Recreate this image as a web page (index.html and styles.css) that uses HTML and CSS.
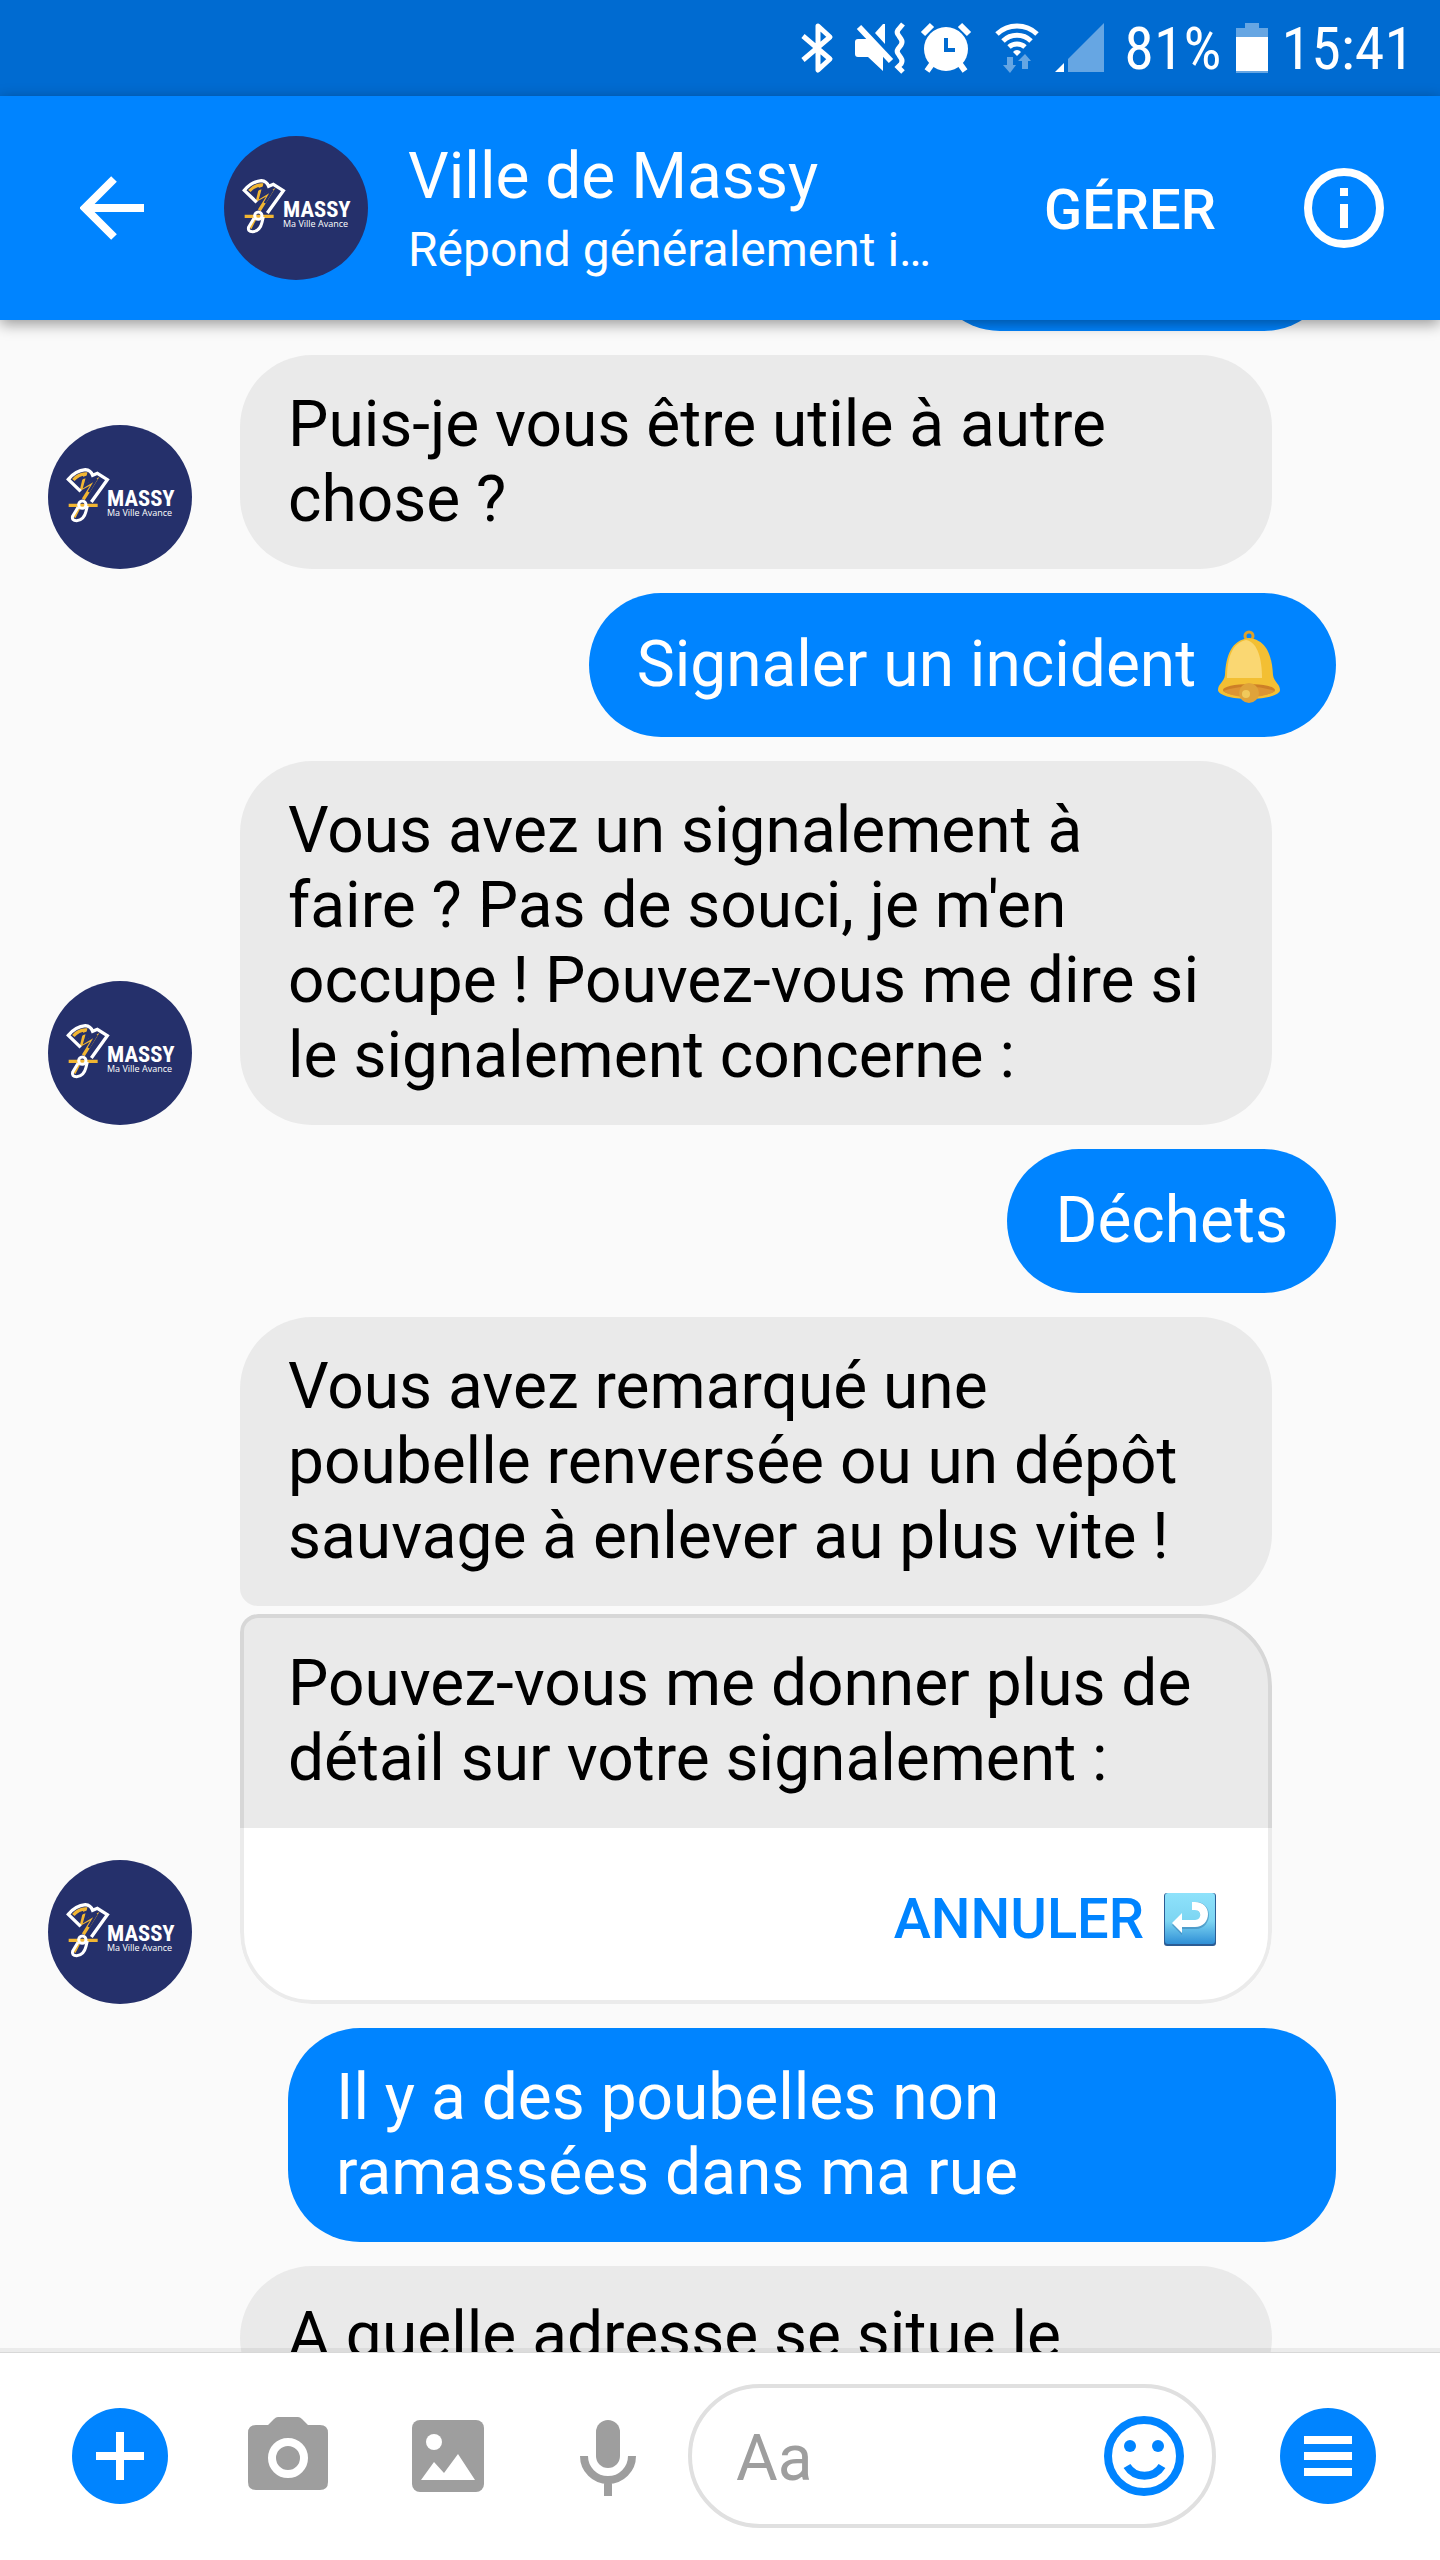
FILE: index.html
```html
<!DOCTYPE html>
<html lang="fr">
<head>
  <meta charset="UTF-8">
  <meta name="viewport" content="width=device-width, initial-scale=1">
  <title>Ville de Massy</title>
  <link rel="stylesheet" href="styles.css">
</head>
<body>

  <svg class="sprite" aria-hidden="true">
    <symbol id="logo" viewBox="54 45 432 432">
      <circle cx="270" cy="261" r="216" fill="#25306b"/>
      <path d="M130 210Q146 192 166 192L156 234L194 214L160 268M116 286H203M148 290L132 322" fill="none" stroke="#f2b632" stroke-width="10"/>
      <path d="M146 212Q158 202 172 200L164 228L200 206L176 246" fill="none" stroke="#25306b" stroke-width="7"/>
      <path d="M152 244L115 208Q136 182 166 179Q182 180 188 196L202 190L232 209L184 276" fill="none" stroke="#fff" stroke-width="10"/>
      <circle cx="157" cy="284" r="11" fill="none" stroke="#fff" stroke-width="9"/>
      <path d="M144 292L128 318Q124 332 140 332Q162 330 168 304L172 288" fill="none" stroke="#fff" stroke-width="9"/>
      <text class="logo-name" x="231" y="289">MASSY</text>
      <text class="logo-tag" x="231" y="318">Ma Ville Avance</text>
    </symbol>
  </svg>

  <div class="status">
    <div class="status-icons">
      <svg width="50" height="52" viewBox="0 0 50 52"><path d="M9 14L36 37L24 48V4L36 15L9 38" fill="none" stroke="#fff" stroke-width="5" stroke-linejoin="round"/></svg>
      <svg width="70" height="52" viewBox="0 0 70 52">
        <path d="M14 17H24L39 33V49L24 35H14a3 3 0 0 1-3-3V20a3 3 0 0 1 3-3zM31 11L39 2H41V22z" fill="#fff"/>
        <path d="M15 5L47 39" stroke="#fff" stroke-width="6"/>
        <path d="M59 2L54 8Q52 11 55 14L57 17Q59 20 57 23L54 27Q52 30 55 33L57 36Q59 39 57 42L54 45L59 50" fill="none" stroke="#fff" stroke-width="5"/>
      </svg>
      <svg width="70" height="52" viewBox="0 0 70 52">
        <circle cx="32" cy="27" r="22" fill="#fff"/>
        <path d="M9 12L18 3M46 3L55 12M13 49L18 42M51 49L46 42" stroke="#fff" stroke-width="6"/>
        <path d="M32 16V28H41" fill="none" stroke="#006bd1" stroke-width="4"/>
      </svg>
      <svg width="65" height="52" viewBox="0 0 65 52">
        <path d="M13 12A29 29 0 0 1 53 12M19 19A20 20 0 0 1 47 19M25 25A12 12 0 0 1 41 25" fill="none" stroke="#fff" stroke-width="5"/>
        <path d="M33 34L29 30a5 5 0 0 1 8 0z" fill="#fff"/>
        <path d="M23 35H29V43H32L26 51L19 43H23zM38 47V39H34L41 32L47 39H44V47z" fill="#66a6e3"/>
      </svg>
      <svg width="70" height="52" viewBox="0 0 70 52">
        <path d="M6 50L15 41V50z" fill="#fff"/>
        <path d="M19 50V37L55 1V50z" fill="#66a6e3"/>
      </svg>
    </div>
    <span>81%</span>
    <svg width="32" height="50" viewBox="0 0 32 50">
      <path d="M9 0H23V5H32V50H0V5H9z" fill="#66a6e3"/>
      <path d="M0 14H32V48H0z" fill="#fff"/>
    </svg>
    <span>15:41</span>
  </div>

  <header class="topbar">
    <button class="icon-btn back" aria-label="Retour">
      <svg width="64" height="64" viewBox="0 0 64 64"><path d="M64 32H6M34 3L5 32L34 61" fill="none" stroke="#fff" stroke-width="8"/></svg>
    </button>
    <svg class="avatar"><use href="#logo"/></svg>
    <div class="contact">
      <h1>Ville de Massy</h1>
      <p>Répond généralement i…</p>
    </div>
    <button class="manage">GÉRER</button>
    <button class="icon-btn" aria-label="Informations">
      <svg width="80" height="80" viewBox="0 0 80 80">
        <circle cx="40" cy="40" r="36" fill="none" stroke="#fff" stroke-width="8"/>
        <path d="M36 20H44V28H36zM36 36H44V60H36z" fill="#fff"/>
      </svg>
    </button>
  </header>

  <main class="chat">
    <div class="bubble sent sent-hidden"></div>

    <div class="row">
      <svg class="avatar"><use href="#logo"/></svg>
      <div class="bubble">Puis-je vous être utile à autre chose ?</div>
    </div>

    <div class="bubble sent short">Signaler un incident
      <svg class="bell" width="76" height="76" viewBox="0 0 76 76" role="img" aria-label="cloche">
        <circle cx="37" cy="8" r="4" fill="none" stroke="#dba12d" stroke-width="3"/>
        <path d="M37 10C55 12 60 28 61 47C62 54 68 56 68 62C68 67 54 71 37 71S6 67 6 62C6 56 12 54 13 47C14 28 19 12 37 10z" fill="#f3bf33"/>
        <path d="M15 50C15 30 20 15 34 12C46 14 50 32 50 50z" fill="#fad772"/>
        <ellipse cx="37" cy="62" rx="26" ry="6" fill="#cd7f27"/>
        <path d="M11 63Q37 54 63 63Q54 69 37 69T11 63z" fill="#dd9433"/>
        <circle cx="37" cy="65" r="10" fill="#dfa33a"/>
        <circle cx="34" cy="66" r="4" fill="#f0c95b"/>
      </svg>
    </div>

    <div class="row">
      <svg class="avatar"><use href="#logo"/></svg>
      <div class="bubble">Vous avez un signalement à faire ? Pas de souci, je m'en occupe ! Pouvez-vous me dire si le signalement concerne :</div>
    </div>

    <div class="bubble sent short">Déchets</div>

    <div class="row">
      <svg class="avatar"><use href="#logo"/></svg>
      <div class="group">
        <div class="bubble first">Vous avez remarqué une poubelle renversée ou un dépôt sauvage à enlever au plus vite !</div>
        <div class="card">
          <p>Pouvez-vous me donner plus de détail sur votre signalement :</p>
          <button class="cancel">
            ANNULER
            <svg width="52" height="54" viewBox="0 0 52 54">
              <defs>
                <linearGradient id="key" x1="0" y1="0" x2="0" y2="1">
                  <stop offset="0" stop-color="#8ee2fb"/>
                  <stop offset=".55" stop-color="#7dd5f2"/>
                  <stop offset="1" stop-color="#2f8fd6"/>
                </linearGradient>
              </defs>
              <rect y="1" width="52" height="53" rx="3" fill="#2b5c94"/>
              <rect x="1" y="1" width="50" height="51" rx="3" fill="url(#key)"/>
              <path d="M28 10H32C40 10 45 16 45 23S40 37 32 37H18V43L8 33L18 23V29H31C38 29 38 18 31 18H28z" fill="#3f86b5" opacity=".6"/>
              <path d="M28 10H31C39 10 44 15 44 22S39 35 31 35H18V41L8 31L18 21V28H31C38 28 38 18 31 18H28z" fill="#fff"/>
            </svg>
          </button>
        </div>
      </div>
    </div>

    <div class="bubble sent">Il y a des poubelles non ramassées dans ma rue</div>

    <div class="row last">
      <div class="bubble">A quelle adresse se situe le</div>
    </div>
  </main>

  <form class="composer">
    <button type="button" class="icon-btn" aria-label="Plus">
      <svg width="96" height="96" viewBox="0 0 96 96"><circle cx="48" cy="48" r="48" fill="#0084ff"/><path d="M24 48H72M48 24V72" stroke="#fff" stroke-width="8"/></svg>
    </button>
    <button type="button" class="icon-btn" aria-label="Appareil photo">
      <svg width="80" height="80" viewBox="0 0 80 80">
        <path d="M8 9H20L26 3Q28 1 30 1H50Q52 1 54 3L60 9H72Q80 9 80 17V66Q80 74 72 74H8Q0 74 0 66V17Q0 9 8 9z" fill="#9e9e9e"/>
        <circle cx="40" cy="42" r="16" fill="none" stroke="#fff" stroke-width="8"/>
      </svg>
    </button>
    <button type="button" class="icon-btn" aria-label="Galerie">
      <svg width="80" height="80" viewBox="0 0 80 80">
        <rect x="4" y="4" width="72" height="72" rx="8" fill="#9e9e9e"/>
        <circle cx="26" cy="26" r="8" fill="#fff"/>
        <path d="M13 64L26 46L36 57L50 38L67 64z" fill="#fff"/>
      </svg>
    </button>
    <button type="button" class="icon-btn" aria-label="Micro">
      <svg width="80" height="80" viewBox="0 0 80 80">
        <rect x="28" y="4" width="24" height="48" rx="12" fill="#9e9e9e"/>
        <path d="M16 40A24 24 0 0 0 64 40M40 64V80" fill="none" stroke="#9e9e9e" stroke-width="8"/>
      </svg>
    </button>
    <div class="field">
      <input type="text" placeholder="Aa" aria-label="Message">
      <button type="button" class="icon-btn" aria-label="Emoji">
        <svg width="80" height="80" viewBox="0 0 80 80">
          <circle cx="40" cy="40" r="36" fill="none" stroke="#0084ff" stroke-width="8"/>
          <circle cx="26" cy="30" r="6" fill="#0084ff"/>
          <circle cx="54" cy="30" r="6" fill="#0084ff"/>
          <path d="M23 50C31 63 50 63 58 50" fill="none" stroke="#0084ff" stroke-width="8"/>
        </svg>
      </button>
    </div>
    <button type="button" class="icon-btn" aria-label="Menu">
      <svg width="96" height="96" viewBox="0 0 96 96"><circle cx="48" cy="48" r="48" fill="#0084ff"/><path d="M24 32H72M24 48H72M24 64H72" stroke="#fff" stroke-width="8"/></svg>
    </button>
  </form>

</body>
</html>
```

FILE: styles.css
```css
* {
  box-sizing: border-box;
}

body {
  margin: 0;
  height: 100vh;
  display: flex;
  flex-direction: column;
  overflow: hidden;
  background-color: #fafafa;
  color: #000;
  font-family: Roboto, sans-serif;
  font-size: 64px;
  line-height: 75px;
}

h1, p {
  margin: 0;
}

svg {
  display: block;
  flex-shrink: 0;
}

button {
  padding: 0;
  border: none;
  background: none;
  font: inherit;
  cursor: pointer;
}

.sprite {
  position: absolute;
  width: 0;
  height: 0;
}

.logo-name {
  fill: #fff;
  font-family: "Roboto Condensed", "Liberation Sans Narrow", sans-serif;
  font-size: 68px;
  font-weight: bold;
}

.logo-tag {
  fill: #fff;
  font-family: "Open Sans", sans-serif;
  font-size: 27px;
}

.avatar {
  width: 144px;
  height: 144px;
}

/* barre d'état */
.status {
  flex-shrink: 0;
  height: 96px;
  padding-right: 26px;
  display: flex;
  align-items: center;
  justify-content: flex-end;
  gap: 14px;
  background-color: #006bd1;
  color: #fff;
  font-family: "Roboto Condensed", "Liberation Sans Narrow", sans-serif;
  font-size: 60px;
}

.status-icons {
  display: flex;
  margin-right: -9px;
}

/* en-tête */
.topbar {
  flex-shrink: 0;
  height: 224px;
  padding: 0 56px 0 80px;
  display: flex;
  align-items: center;
  background-color: #0084ff;
  color: #fff;
  box-shadow: 0 4px 14px rgba(0, 0, 0, 0.4);
  z-index: 1;
}

.back {
  margin-right: 80px;
}

.contact {
  flex: 1;
  min-width: 0;
  display: flex;
  flex-direction: column;
  gap: 8px;
  margin-left: 40px;
}

.contact h1 {
  font-size: 64px;
  font-weight: normal;
}

.contact p {
  font-size: 48px;
  line-height: 56px;
  white-space: nowrap;
}

.manage {
  margin-right: 88px;
  padding-top: 4px;
  color: #fff;
  font-size: 56px;
  font-weight: 500;
}

/* messages */
.chat {
  flex: 1 1 0;
  min-height: 0;
  margin-top: -133px;
  display: flex;
  flex-direction: column;
  align-items: flex-start;
  gap: 24px;
  overflow: hidden;
}

.chat > * {
  flex-shrink: 0;
}

.row {
  display: flex;
  align-items: flex-end;
  gap: 48px;
  width: 100%;
  padding: 0 168px 0 48px;
}

.row.last {
  padding-left: 240px;
}

.row > .bubble,
.group {
  flex: 1;
}

.group {
  display: flex;
  flex-direction: column;
  gap: 8px;
}

.bubble {
  min-height: 144px;
  padding: 32px 48px;
  border-radius: 72px;
  background-color: #eaeaea;
}

.bubble.first {
  border-bottom-left-radius: 18px;
}

.bubble.sent {
  align-self: flex-end;
  max-width: 1048px;
  margin-right: 104px;
  background-color: #0084ff;
  color: #fff;
}

.bubble.short {
  height: 144px;
  padding-top: 34px;
}

.sent-hidden {
  width: 408px;
}

.bell {
  display: inline-block;
  vertical-align: -18px;
}

.card {
  position: relative;
  overflow: hidden;
  border-radius: 18px 72px 72px 72px;
  background-color: #fff;
}

/* contour par-dessus les deux fonds */
.card::after {
  content: "";
  position: absolute;
  inset: 0;
  border: 4px solid rgba(0, 0, 0, 0.08);
  border-radius: inherit;
  pointer-events: none;
}

.card p {
  padding: 32px 48px;
  background-color: #eaeaea;
}

.cancel {
  width: 100%;
  display: flex;
  align-items: center;
  justify-content: flex-end;
  gap: 20px;
  padding: 58px 56px 52px;
  color: #0084ff;
  font-size: 56px;
  font-weight: 500;
  line-height: 66px;
}

/* saisie */
.composer {
  flex-shrink: 0;
  display: flex;
  align-items: center;
  gap: 80px;
  padding: 32px 64px 32px 72px;
  background-color: #fff;
  box-shadow: 0 -4px 0 rgba(0, 0, 0, 0.06), inset 0 1px 0 #d8d8d8;
  z-index: 1;
}

.field {
  flex: 1;
  min-width: 0;
  height: 144px;
  margin: 0 -16px 0 -40px;
  padding: 0 28px 0 44px;
  display: flex;
  align-items: center;
  border: 4px solid #e0e0e0;
  border-radius: 72px;
}

.field input {
  flex: 1;
  min-width: 0;
  height: 80px;
  padding: 4px 0 0;
  border: none;
  outline: none;
  background: none;
  color: #000;
  font: inherit;
}

.field input::placeholder {
  color: #9e9e9e;
  opacity: 1;
}
```
